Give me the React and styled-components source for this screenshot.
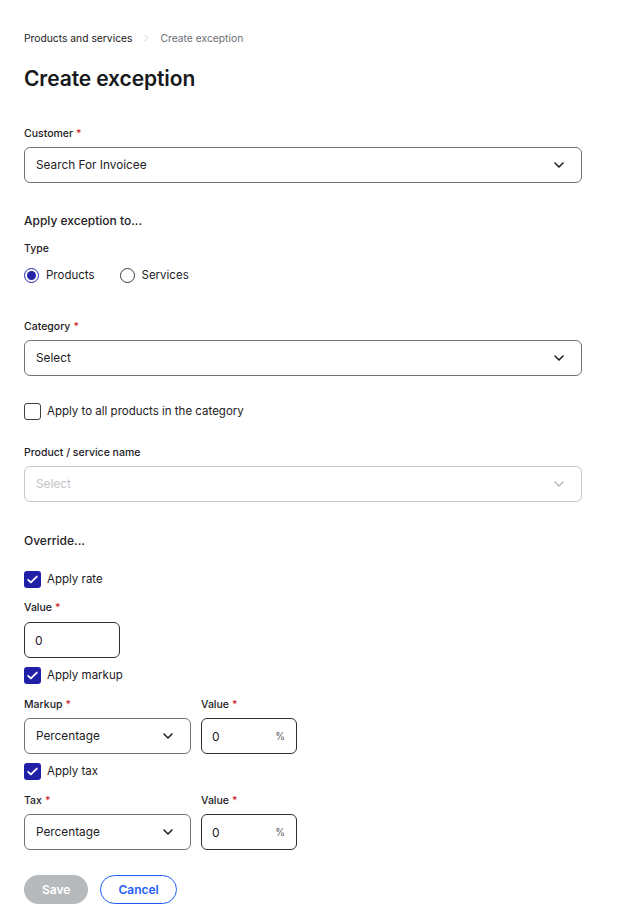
import React, { useState } from 'react';
import styled, { createGlobalStyle } from 'styled-components';

const GlobalStyle = createGlobalStyle`
    * {
        box-sizing: border-box;
    }
    body {
        margin: 0;
        background: #ffffff;
        font-family: Inter, "Noto Sans", "Liberation Sans", sans-serif;
        color: #1d2025;
    }
`;

const Page = styled.div`
    display: flex;
    flex-direction: column;
    padding: 30px 36px 20px 24px;
`;

const Breadcrumb = styled.nav`
    display: flex;
    align-items: center;
    gap: 9px;
    font-size: 10.3px;
    line-height: 16px;
    color: #1d2025;
    span.current {
        color: #6b6f75;
    }
    svg {
        color: #c3c6ca;
    }
`;

const Title = styled.h1`
    margin: 19px 0 0 0;
    font-size: 21px;
    line-height: 28px;
    font-weight: 600;
    letter-spacing: -0.1px;
    color: #16191d;
`;

const Section = styled.div`
    display: flex;
    flex-direction: column;
    margin-top: ${props => props.top}px;
`;

const Heading = styled.div`
    font-size: 12px;
    line-height: 16px;
    font-weight: 500;
    color: #1d2025;
`;

const Label = styled.label`
    display: block;
    font-size: 10.5px;
    line-height: 16px;
    font-weight: 500;
    color: #1d2025;
    margin-bottom: ${props => props.gap ?? 5}px;
    .req {
        color: #d0242b;
        margin-left: 3px;
    }
`;

const SelectBox = styled.div`
    display: flex;
    align-items: center;
    justify-content: space-between;
    width: ${props => props.width || '100%'};
    height: 36px;
    padding: 0 14px 0 11px;
    border: 1px solid ${props => props.disabled ? '#c4c6c9' : '#6f7378'};
    border-radius: 6px;
    font-size: 11.8px;
    color: ${props => props.disabled ? '#c2c4c7' : '#1d2025'};
    background: #fff;
    svg {
        color: ${props => props.disabled ? '#b9bcc0' : '#1d2025'};
    }
`;

const TextInput = styled.div`
    display: flex;
    align-items: center;
    justify-content: space-between;
    width: ${props => props.width}px;
    height: 36px;
    padding: 0 10px 0 10px;
    border: 1px solid #2a2d31;
    border-radius: 6px;
    font-size: 12px;
    color: #1d2025;
    .unit {
        font-size: 10px;
        color: #55595e;
        margin-right: 1px;
    }
`;

const RadioRow = styled.div`
    display: flex;
    align-items: center;
    gap: 25px;
    margin-top: 10px;
`;

const RadioOption = styled.div`
    display: flex;
    align-items: center;
    gap: 7px;
    font-size: 11.5px;
    line-height: 16px;
    color: #1d2025;
    cursor: pointer;
`;

const RadioDot = styled.span`
    width: 15px;
    height: 15px;
    border-radius: 50%;
    border: ${props => props.checked ? '1.5px solid #2324a8' : '1px solid #3b3e43'};
    display: flex;
    align-items: center;
    justify-content: center;
    &::after {
        content: '';
        display: ${props => props.checked ? 'block' : 'none'};
        width: 9px;
        height: 9px;
        border-radius: 50%;
        background: #2324a8;
    }
`;

const CheckRow = styled.div`
    display: flex;
    align-items: center;
    gap: 6px;
    height: 18px;
    font-size: 11.5px;
    color: #1d2025;
    margin-top: ${props => props.top}px;
`;

const Box = styled.span`
    width: 17px;
    height: 17px;
    border-radius: 3px;
    display: flex;
    align-items: center;
    justify-content: center;
    border: ${props => props.checked ? 'none' : '1px solid #3b3e43'};
    background: ${props => props.checked ? '#1f1fa8' : '#fff'};
`;

const Row = styled.div`
    display: flex;
    gap: 10px;
    margin-top: ${props => props.top}px;
`;

const Actions = styled.div`
    display: flex;
    gap: 12px;
    margin-top: 25px;
`;

const Button = styled.button`
    height: 29px;
    padding: 0 ${props => props.primary ? 18 : 17}px;
    border-radius: 15px;
    font-family: inherit;
    font-size: 12px;
    font-weight: 600;
    border: ${props => props.primary ? 'none' : '1px solid #1f5df5'};
    background: ${props => props.primary ? '#b7babd' : '#fff'};
    color: ${props => props.primary ? '#ffffff' : '#1f5df5'};
`;

const Chevron = () => (
    <svg width="16" height="16" viewBox="0 0 24 24" fill="none" stroke="currentColor" strokeWidth="2.4" strokeLinecap="round" strokeLinejoin="round">
        <path d="M6 9l6 6 6-6" />
    </svg>
);

const Check = () => (
    <svg width="13" height="13" viewBox="0 0 24 24" fill="none" stroke="#fff" strokeWidth="3.2" strokeLinecap="round" strokeLinejoin="round">
        <path d="M4 12.5l5 5L20 6.5" />
    </svg>
);

const Req = () => <span className="req">*</span>;

const Checkbox = ({ checked, top, children }) => (
    <CheckRow top={top}>
        <Box checked={checked}>{checked && <Check />}</Box>
        {children}
    </CheckRow>
);

const App = () => {
    const [type, setType] = useState('products');

    return (
        <Page>
            <GlobalStyle />
            <Breadcrumb>
                <span>Products and services</span>
                <svg width="10" height="10" viewBox="0 0 24 24" fill="none" stroke="currentColor" strokeWidth="2" strokeLinecap="round" strokeLinejoin="round">
                    <path d="M9 5l7 7-7 7" />
                </svg>
                <span className="current">Create exception</span>
            </Breadcrumb>

            <Title>Create exception</Title>

            <Section top={33}>
                <Label>Customer<Req /></Label>
                <SelectBox>
                    <span>Search For Invoicee</span>
                    <Chevron />
                </SelectBox>
            </Section>

            <Section top={30}>
                <Heading>Apply exception to...</Heading>
                <Label style={{ marginTop: 12 }} gap={0}>Type</Label>
                <RadioRow>
                    <RadioOption onClick={() => setType('products')}>
                        <RadioDot checked={type === 'products'} />
                        Products
                    </RadioOption>
                    <RadioOption onClick={() => setType('services')}>
                        <RadioDot checked={type === 'services'} />
                        Services
                    </RadioOption>
                </RadioRow>
            </Section>

            <Section top={36}>
                <Label>Category<Req /></Label>
                <SelectBox>
                    <span>Select</span>
                    <Chevron />
                </SelectBox>
            </Section>

            <Checkbox top={26}>Apply to all products in the category</Checkbox>

            <Section top={25}>
                <Label>Product / service name</Label>
                <SelectBox disabled>
                    <span>Select</span>
                    <Chevron />
                </SelectBox>
            </Section>

            <Section top={31}>
                <Heading>Override...</Heading>
            </Section>

            <Checkbox checked top={21}>Apply rate</Checkbox>
            <Section top={12}>
                <Label gap={6}>Value<Req /></Label>
                <TextInput width={96}>0</TextInput>
            </Section>

            <Checkbox checked top={8}>Apply markup</Checkbox>
            <Row top={13}>
                <div>
                    <Label>Markup<Req /></Label>
                    <SelectBox width="167px">
                        <span>Percentage</span>
                        <Chevron />
                    </SelectBox>
                </div>
                <div>
                    <Label>Value<Req /></Label>
                    <TextInput width={96}>
                        <span>0</span>
                        <span className="unit">%</span>
                    </TextInput>
                </div>
            </Row>

            <Checkbox checked top={8}>Apply tax</Checkbox>
            <Row top={13}>
                <div>
                    <Label>Tax<Req /></Label>
                    <SelectBox width="167px">
                        <span>Percentage</span>
                        <Chevron />
                    </SelectBox>
                </div>
                <div>
                    <Label>Value<Req /></Label>
                    <TextInput width={96}>
                        <span>0</span>
                        <span className="unit">%</span>
                    </TextInput>
                </div>
            </Row>

            <Actions>
                <Button primary>Save</Button>
                <Button>Cancel</Button>
            </Actions>
        </Page>
    );
};

export default App;
